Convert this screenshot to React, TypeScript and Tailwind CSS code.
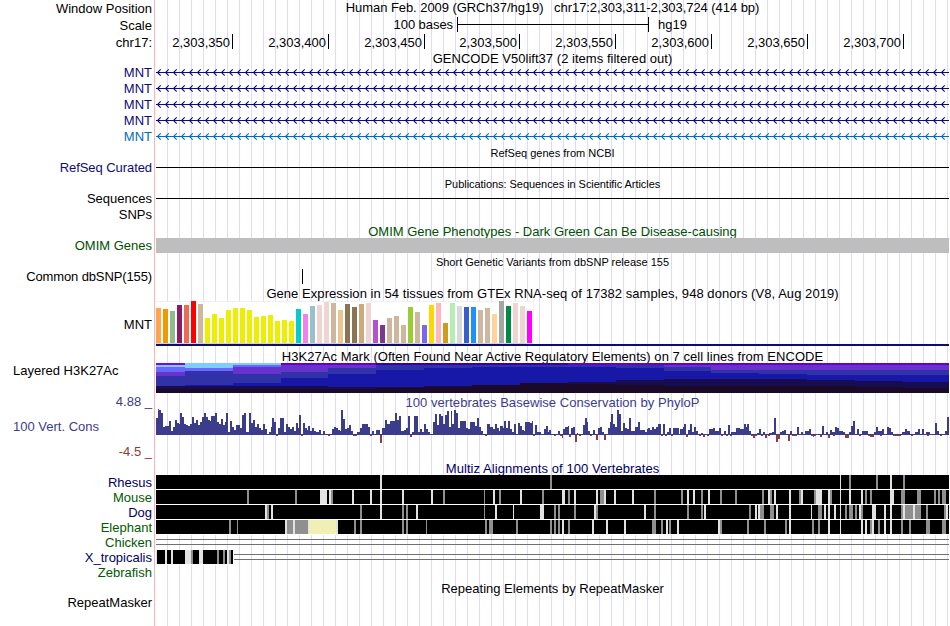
import React from 'react';

type Stripe = [number, number, string];

interface RowProps {
  height: string;
  label?: string;
  labelClass?: string;
  align?: string;
  children?: React.ReactNode;
}

const L = '#e2e2e2';
const G = '#8f8f8f';

const Row = ({ height, label, labelClass = '', align = 'text-right', children }: RowProps) => (
  <div className={`flex w-[949px] shrink-0 ${height}`}>
    <div className={`w-[154px] shrink-0 whitespace-pre pr-[2px] leading-[16px] ${align} ${labelClass}`}>{label}</div>
    <div className="h-full w-[795px] shrink-0 border-l border-[#ffb4b4] pl-[1px]">
      <div className="h-full w-[793px] bg-[repeating-linear-gradient(90deg,transparent_0_11px,#dcdcff_11px_12px)]">
        {children}
      </div>
    </div>
  </div>
);

const Title = ({ text, className = '' }: { text: string; className?: string }) => (
  <div className={`whitespace-pre text-center leading-[16px] ${className}`}>{text}</div>
);

// svg canvas that uses the window's own x coordinates
const Plot = ({ top, height, children }: { top: number; height: number; children: React.ReactNode }) => (
  <svg width={793} height={height} viewBox={`156 ${top} 793 ${height}`} shapeRendering="crispEdges" className="block">
    {children}
  </svg>
);

const arrows = Array.from({ length: 99 }, (_, i) => 157 + i * 8);

const GeneRow = ({ color, labelClass }: { color: string; labelClass: string }) => (
  <Row height="h-[16px]" label="MNT" labelClass={`pt-[1px] ${labelClass}`}>
    <svg width={793} height={16} viewBox="156 0 793 16" className="block">
      <rect x={156} y={8} width={793} height={1} fill={color} />
      <path d={arrows.map((x) => `M${x + 3.7} 5.3L${x + 0.5} 8.5L${x + 3.7} 11.7`).join('')} fill="none" stroke={color} strokeWidth={1.1} />
    </svg>
  </Row>
);

const ruler = [
  ['2,303,350', 'w-[77px]'],
  ['2,303,400', 'w-[96px]'],
  ['2,303,450', 'w-[96px]'],
  ['2,303,500', 'w-[95px]'],
  ['2,303,550', 'w-[96px]'],
  ['2,303,600', 'w-[96px]'],
  ['2,303,650', 'w-[96px]'],
  ['2,303,700', 'w-[96px]'],
];

const gtexTops = [
  308, 309, 311, 305, 305, 301, 304, 318, 314, 318, 310, 308, 308, 310, 317, 316, 315, 321,
  320, 321, 309, 314, 306, 305, 302, 303, 310, 304, 307, 304, 303, 320, 325, 318, 316, 325,
  307, 312, 325, 305, 303, 323, 303, 306, 307, 307, 310, 308, 314, 301, 306, 303, 306, 311,
];

const gtexColors = [
  '#ffa54f', '#ee9a00', '#8fbc8f', '#8b1c62', '#ee6a50', '#ff0000', '#cdb79e',
  ...Array(13).fill('#eeee00'),
  '#00cdcd', '#ee82ee', '#9ac0cd', '#eed5d2', '#eed5d2', '#cdb79e', '#eec591', '#8b7355', '#8b7355', '#cdaa7d', '#eed5d2',
  '#b452cd', '#7a378b', '#cdb79e', '#cdb79e', '#cdb79e', '#9acd32', '#cdb79e', '#7a67ee', '#ffd700', '#ffb6c1', '#cd9b1d',
  '#b4eeb4', '#d9d9d9', '#3a5fcd', '#1e90ff', '#cdb79e', '#cdb79e', '#ffd39b', '#a6a6a6', '#008b45', '#eed5d2', '#eed5d2', '#ff00ff',
];

const layerColors: Record<string, string> = {
  v: '#7f00ff',
  m: '#6600cc',
  n: '#3a00a8',
  l: '#80ccff',
  s: '#6868ff',
  p: '#6833cc',
  i: '#3232a8',
  b: '#1818a8',
  d: '#180c50',
  k: '#1a0a28',
};

// start x, then each layer's colour key with the y where it stops
const acetyl: [number, string][] = [
  [156, 'v365 l367 s372 p376 i386 d389 k393'],
  [185, 'l368 s371 i385 b386 d389 k393'],
  [233, 'l365 s367 p374 i383 b386 d389 k393'],
  [281, 'm365 p372 i378 b386 d389 k393'],
  [328, 'm365 p368 i374 b387 d389 k393'],
  [376, 'n365 i370 b387 d388 k393'],
  [424, 'n365 i368 b386 d387 k393'],
  [472, 'n365 i367 b385 k393'],
  [520, 'n365 i367 b383 k393'],
  [568, 'm365 i367 b382 d384 k393'],
  [616, 'm365 i368 b380 d385 k393'],
  [664, 'm365 p367 i371 b379 d386 k393'],
  [711, 'm365 p370 i373 b379 d386 k393'],
  [759, 'm365 p370 i374 b379 d386 k393'],
  [807, 'm365 p370 i375 b380 d386 k393'],
  [855, 'm365 p370 i375 b381 d387 k393'],
  [903, 'm365 p370 i375 b382 d388 k393'],
  [949, ''],
];

const AcetylPlot = () => (
  <Plot top={363} height={30}>
    {acetyl.slice(0, -1).map(([x, layers], i) => {
      let y = 363;
      return layers.split(' ').map((layer) => {
        const end = Number(layer.slice(1));
        const rect = <rect key={`${x}-${y}`} x={x} y={y} width={acetyl[i + 1][0] - x} height={end - y} fill={layerColors[layer[0]]} />;
        y = end;
        return rect;
      });
    })}
  </Plot>
);

// x:height steps in thirds of a pixel, one list for each part of the window
const consSteps: [number, string][] = [
  [150, '18:51 24:75 33:66 39:24 45:27 57:42 63:12 69:24 75:45 81:36 87:33 90:66 96:54 102:33 108:30 114:27 120:33 126:54 132:36 138:45 144:30 150:39 156:54 162:66 168:54 174:45 180:42 183:57 195:66 201:39 207:33 213:48 219:30 225:39 228:66 234:9 240:42 246:24 252:15 258:30 270:21 276:60 282:66 288:9 297:66 303:36 309:45 315:24 321:33 327:21 333:15 339:33 345:18 351:3 357:9 363:24 366:51 372:39 378:0 384:21 390:51 402:9 408:33 414:24 420:18 426:24 432:12 438:36 444:21 447:60 453:0 459:36 465:21 471:15 474:27 480:12 486:21 492:12 498:9 507:15 513:3 519:12 525:3 534:0 540:3 546:18 552:24 558:21 564:15 570:12 573:75 579:48 585:18 591:21 597:30 603:12 609:0 621:9 630:21 636:33 654:24 660:0 666:12 672:3 678:15 690:0 696:21 705:45 711:33 720:42 735:66 741:45 747:57 753:12 762:15 768:21 774:57 780:0 786:9 792:57 795:57'],
  [415, '0:57 9:9 15:18 21:9 27:33 33:18 39:9 45:3 54:39 60:63 66:30 72:63 78:57 84:33 90:60 96:72 102:24 108:72 111:33 117:75 123:66 129:21 135:42 153:21 159:18 165:39 180:27 186:51 192:24 198:12 204:3 210:0 216:33 225:24 234:18 240:33 246:21 252:12 255:27 264:21 267:42 273:21 279:42 285:18 291:9 297:33 303:3 309:36 315:27 321:15 327:12 330:39 345:36 351:42 354:0 360:30 366:9 378:3 387:18 393:27 399:9 402:15 408:3 417:0 423:3 429:12 435:0 444:18 450:24 459:27 462:3 468:21 474:24 480:0 486:6 489:3 504:30 510:51 516:39 519:12 525:3 534:15 540:3 549:21 555:24 561:9 567:0 573:3 579:21 585:39 588:63 594:33 600:24 606:75 612:63 618:12 624:36 630:21 636:18 642:51 648:12 660:24 669:39 675:15 690:9 696:18 699:21 705:15 711:24 717:18 723:24 729:33 738:0 744:33 750:3 756:9 762:21 768:3 774:21 792:21'],
  [680, '0:18 9:24 12:33 18:0 24:15 30:33 36:9 42:24 48:12 54:3 63:6 69:0 75:3 81:0 87:18 99:21 105:12 117:21 123:3 132:12 138:0 144:30 150:3 153:9 168:21 180:18 192:33 198:24 201:33 207:12 213:0 231:6 237:18 243:0 249:9 255:0 267:6 276:9 282:51 288:0 300:9 306:12 312:15 318:3 330:12 336:0 351:24 357:3 363:9 369:3 375:12 387:18 393:0 408:3 414:0 426:27 432:3 438:9 444:0 450:15 456:9 465:24 471:21 477:12 489:9 495:0 507:9 513:27 519:42 525:3 531:18 537:3 546:12 564:0 582:9 588:24 594:12 606:18 612:3 621:24 627:21 633:9 639:0 663:3 666:9 675:18 681:12 690:3 693:0 699:3 705:9 714:18 720:3 726:18 732:3 738:9 750:3 765:36 771:12 777:3 783:0 789:3 795:12 801:54 807:54'],
];

// [x, width, depth]
const consDrops = [
  [276, 2, 1], [301, 2, 1], [328, 2, 1], [353, 4, 1], [370, 2, 1], [380, 2, 8], [410, 2, 2],
  [485, 2, 1], [533, 2, 1], [554, 2, 1], [560, 2, 1], [562, 1, 3], [569, 2, 2], [575, 2, 7], [579, 2, 1],
  [590, 2, 1], [596, 2, 5], [604, 2, 5], [661, 2, 1], [665, 2, 1], [671, 2, 1],
  [686, 2, 2], [699, 2, 1], [703, 2, 2], [707, 2, 1], [721, 2, 1], [726, 2, 1], [730, 2, 1],
  [751, 2, 1], [753, 2, 3], [755, 2, 1], [761, 2, 1], [765, 2, 3], [768, 2, 1], [776, 2, 7], [778, 2, 4],
  [788, 2, 6], [792, 5, 1], [811, 5, 1], [813, 1, 2], [820, 2, 2], [828, 2, 3], [833, 2, 1],
  [845, 4, 3], [859, 2, 1], [868, 6, 1], [870, 4, 2], [880, 2, 1], [893, 8, 1], [911, 2, 1], [927, 2, 1], [940, 2, 1],
];

const ConsPlot = () => (
  <Plot top={409} height={36}>
    {consSteps.map(([origin, steps]) => {
      const list = steps.split(' ').map((s) => s.split(':').map(Number));
      return list.slice(0, -1).map(([x, h], i) => (
        <rect
          key={`${origin}-${x}`}
          x={origin + x / 3}
          y={435 - h / 3}
          width={(list[i + 1][0] - x) / 3}
          height={h / 3}
          fill="#3c3c8c"
        />
      ));
    })}
    <rect x={156} y={434} width={793} height={1} fill="#3c3c8c" />
    <rect x={158} y={409} width={1} height={2} fill="#ff00ff" />
    {consDrops.map(([x, w, d], i) => (
      <rect key={i} x={x} y={435} width={w} height={d} fill="#8c3c3c" />
    ))}
  </Plot>
);

const rhesus: Stripe[] = [[380, 2, L], [550, 2, G], [840, 1, L], [849, 2, G], [876, 2, G], [890, 2, L], [903, 2, G]];

const mouse: Stripe[] = [
  [247, 2, G], [295, 2, G], [320, 7, L], [329, 2, L], [331, 2, G], [352, 2, L], [370, 2, L], [380, 2, L], [402, 2, L],
  [431, 2, L], [443, 2, G], [484, 1, G], [493, 2, L], [499, 2, G], [520, 2, L], [542, 2, G], [562, 3, L], [568, 2, G],
  [574, 2, L], [596, 2, L], [600, 4, G], [604, 2, L], [614, 2, L], [632, 2, L], [654, 2, G], [681, 2, G], [687, 2, L],
  [693, 2, L], [701, 2, G], [708, 2, L], [720, 2, G], [735, 2, G], [762, 2, G], [768, 2, L], [770, 2, G], [774, 2, L],
  [789, 2, L], [799, 2, G], [801, 2, L], [814, 2, G], [816, 6, L], [828, 2, L], [830, 2, G], [840, 1, L], [849, 2, L],
  [861, 2, L], [865, 2, G], [870, 2, G], [890, 4, L], [901, 4, G], [917, 4, G], [934, 2, G], [938, 2, G], [942, 4, G],
];

const dog: Stripe[] = [
  [265, 2, L], [267, 2, G], [271, 2, L], [360, 2, G], [380, 2, L], [402, 2, G], [406, 2, G], [416, 2, L], [484, 1, G],
  [495, 2, L], [513, 1, L], [540, 4, L], [554, 2, G], [558, 2, G], [574, 2, G], [594, 2, L], [596, 2, G], [644, 2, L],
  [654, 2, G], [687, 2, G], [701, 2, G], [704, 2, L], [749, 2, G], [755, 2, L], [758, 2, L], [760, 4, G], [770, 4, G],
  [776, 2, L], [789, 2, L], [811, 1, L], [818, 4, G], [824, 2, L], [828, 2, L], [834, 2, L], [840, 1, L], [845, 2, G],
  [849, 4, G], [855, 2, G], [859, 2, L], [861, 2, G], [872, 4, L], [884, 2, L], [890, 2, L], [901, 2, G], [903, 2, L],
  [905, 8, G], [913, 2, L], [915, 6, G], [926, 2, G], [944, 2, G], [946, 2, L],
];

const elephant: Stripe[] = [
  [229, 2, G], [237, 1, G], [285, 2, L], [287, 6, G], [293, 2, L], [295, 13, G], [308, 1, L], [309, 27, '#f0f0b4'],
  [336, 2, L], [354, 2, G], [360, 2, G], [402, 2, G], [406, 2, G], [426, 1, G], [485, 2, G], [489, 4, G], [516, 2, G],
  [550, 2, G], [554, 2, G], [558, 2, G], [562, 2, L], [568, 2, G], [592, 2, L], [606, 2, L], [624, 2, L], [652, 4, G],
  [661, 2, G], [666, 2, L], [669, 2, G], [677, 2, L], [718, 2, L], [720, 2, G], [747, 2, G], [764, 2, G], [785, 2, G],
  [789, 2, L], [812, 2, G], [818, 2, G], [828, 2, L], [840, 1, L], [861, 2, L], [865, 2, L], [870, 2, G], [872, 2, L],
  [878, 2, G], [884, 2, L], [890, 2, L], [901, 2, G], [909, 2, G], [926, 4, G], [942, 4, G],
];

const tropicalis: Stripe[] = [
  [156, 1, L], [165, 2, L], [171, 2, L], [185, 6, L], [191, 2, G], [199, 4, L], [217, 2, G], [223, 2, G],
  [227, 2, L], [229, 2, G],
];

interface AlignProps {
  name: string;
  green?: boolean;
  stripes?: Stripe[];
  end?: number;
  gapFrom?: number;
}

const AlignRow = ({ name, green, stripes = [], end = 156, gapFrom }: AlignProps) => (
  <Row height="h-[15px]" label={name} labelClass={green ? 'text-[#005a00]' : 'text-[#000064]'}>
    <Plot top={0} height={15}>
      <rect x={156} y={14} width={end - 156} height={1} fill="#fff" />
      <rect x={156} y={0} width={end - 156} height={14} fill="#000" />
      {stripes.map(([x, w, fill]) => (
        <rect key={x} x={x} y={0} width={w} height={14} fill={fill} />
      ))}
      {gapFrom && <rect x={gapFrom} y={4} width={949 - gapFrom} height={1} fill="#707070" />}
      {gapFrom && <rect x={gapFrom} y={9} width={949 - gapFrom} height={1} fill="#707070" />}
    </Plot>
  </Row>
);

const App = () => {
  return (
    <div className="flex h-[626px] w-[950px] flex-col overflow-hidden bg-white font-['Liberation_Sans',sans-serif] text-[13px] text-black">
      <Row height="h-[16px]" label="Window Position" labelClass="pt-[1px]">
        <Title text="Human Feb. 2009 (GRCh37/hg19)   chr17:2,303,311-2,303,724 (414 bp)" className="tracking-[-0.06px]" />
      </Row>
      <Row height="h-[18px]" label="Scale" labelClass="pt-[2px]">
        <div className="flex h-[17px] items-start">
          <div className="w-[297px] text-right leading-[17px] tracking-[-0.06px]">100 bases</div>
          <div className="ml-[4px] mt-px flex h-[15px] w-[192px] items-center border-x border-black">
            <div className="h-px w-full bg-black" />
          </div>
          <div className="ml-[9px] leading-[17px]">hg19</div>
        </div>
      </Row>
      <Row height="h-[16px]" label="chr17:" labelClass="pt-[1px]">
        <div className="flex">
          {ruler.map(([text, width]) => (
            <div key={text} className={`h-[15px] border-r border-black pr-[2px] text-right leading-[18px] ${width}`}>{text}</div>
          ))}
        </div>
      </Row>
      <Row height="h-[14px]">
        <Title text="GENCODE V50lift37 (2 items filtered out)" className="pt-[1px] tracking-[0.03px]" />
      </Row>
      <GeneRow color="#0c0c78" labelClass="text-[#0c0c78]" />
      <GeneRow color="#0c0c78" labelClass="text-[#0c0c78]" />
      <GeneRow color="#0c0c78" labelClass="text-[#0c0c78]" />
      <GeneRow color="#0c0c78" labelClass="text-[#0c0c78]" />
      <GeneRow color="#006eb4" labelClass="text-[#006eb4]" />

      <Row height="h-[16px]">
        <Title text="RefSeq genes from NCBI" className="pt-[1px] text-[11px]" />
      </Row>
      <Row height="h-[15px]" label="RefSeq Curated" labelClass="text-[#0c0c78] tracking-[-0.07px]">
        <div className="pt-[7px]"><div className="h-px bg-black" /></div>
      </Row>
      <Row height="h-[16px]">
        <Title text="Publications: Sequences in Scientific Articles" className="pt-[1px] text-[11px] tracking-[-0.05px]" />
      </Row>
      <Row height="h-[15px]" label="Sequences">
        <div className="pt-[7px]"><div className="h-px bg-black" /></div>
      </Row>
      <Row height="h-[16px]" label="SNPs" labelClass="pt-[1px]" />
      <Row height="h-[16px]">
        <Title text="OMIM Gene Phenotypes - Dark Green Can Be Disease-causing" className="pt-[2px] text-[#005000]" />
      </Row>
      <Row height="h-[15px]" label="OMIM Genes" labelClass="text-[#005000]">
        <div className="h-full bg-[#bebebe]" />
      </Row>
      <Row height="h-[16px]">
        <Title text="Short Genetic Variants from dbSNP release 155" className="pt-[1px] text-[11px]" />
      </Row>
      <Row height="h-[16px]" label="Common dbSNP(155)" labelClass="tracking-[-0.12px]">
        <div className="ml-[146px] h-[15px] w-px bg-black" />
      </Row>
      <Row height="h-[16px]">
        <Title
          text="Gene Expression in 54 tissues from GTEx RNA-seq of 17382 samples, 948 donors (V8, Aug 2019)"
          className="pt-[1px] tracking-[0.055px]"
        />
      </Row>
      <Row height="h-[45px]" label="MNT" labelClass="pt-[16px]">
        <Plot top={301} height={45}>
          <rect x={156} y={301} width={378} height={43} fill="#f0f0f0" />
          <rect x={156} y={302} width={377} height={41} fill="#fff" />
          {gtexTops.map((top, i) => (
            <rect key={i} x={156 + i * 7} y={top} width={5} height={343 - top} fill={gtexColors[i]} />
          ))}
          <rect x={156} y={343} width={377} height={1} fill="#d2d2d2" />
          <rect x={156} y={344} width={793} height={2} fill="#0c0c78" />
        </Plot>
      </Row>
      <Row height="h-[17px]">
        <Title
          text="H3K27Ac Mark (Often Found Near Active Regulatory Elements) on 7 cell lines from ENCODE"
          className="pt-[3px] tracking-[0.045px]"
        />
      </Row>
      <Row height="h-[30px]" label="Layered H3K27Ac" align="text-left" labelClass="pl-[13px]">
        <AcetylPlot />
      </Row>
      <Row height="h-[16px]" label="4.88 _" labelClass="pt-[1px] text-[#3c3c8c]">
        <Title text="100 vertebrates Basewise Conservation by PhyloP" className="pt-[2px] text-[#3c3c8c] tracking-[0.04px]" />
      </Row>
      <Row height="h-[36px]" label="100 Vert. Cons" align="text-left" labelClass="pl-[13px] pt-[10px] text-[#3c3c8c]">
        <ConsPlot />
      </Row>
      <Row height="h-[16px]" label="-4.5 _" labelClass="-mt-px text-[#8c3c3c]" />
      <Row height="h-[14px]">
        <Title text="Multiz Alignments of 100 Vertebrates" className="text-[#000064] tracking-[0.07px]" />
      </Row>
      <AlignRow name="Rhesus" stripes={rhesus} end={949} />
      <AlignRow name="Mouse" green stripes={mouse} end={949} />
      <AlignRow name="Dog" stripes={dog} end={949} />
      <AlignRow name="Elephant" green stripes={elephant} end={949} />
      <AlignRow name="Chicken" green gapFrom={156} />
      <AlignRow name="X_tropicalis" stripes={tropicalis} end={233} gapFrom={234} />
      <AlignRow name="Zebrafish" green />
      <Row height="h-[15px]">
        <Title text="Repeating Elements by RepeatMasker" className="pt-[1px]" />
      </Row>
      <Row height="h-[31px]" label="RepeatMasker" />
    </div>
  );
};

export default App;
